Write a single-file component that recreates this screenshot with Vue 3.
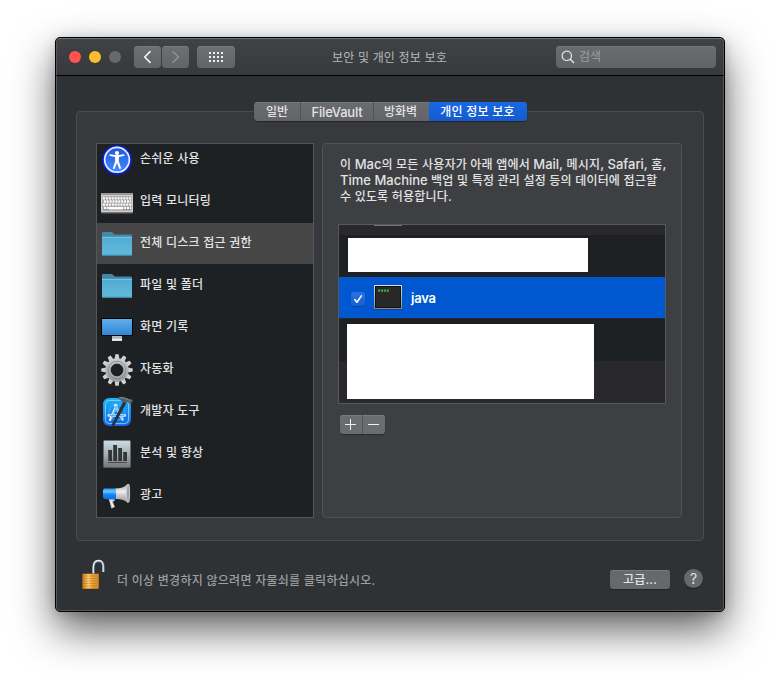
<script setup>
const categories = [
  { id: 'access', label: '손쉬운 사용' },
  { id: 'keyboard', label: '입력 모니터링' },
  { id: 'folder', label: '전체 디스크 접근 권한', selected: true },
  { id: 'folder', label: '파일 및 폴더' },
  { id: 'screen', label: '화면 기록' },
  { id: 'gear', label: '자동화' },
  { id: 'dev', label: '개발자 도구' },
  { id: 'stats', label: '분석 및 향상' },
  { id: 'ads', label: '광고' },
]
const tabs = [
  { label: '일반', cls: 't1' },
  { label: 'FileVault', cls: 't2' },
  { label: '방화벽', cls: 't3' },
  { label: '개인 정보 보호', cls: 't4' },
]
const teeth = Array.from({ length: 12 }, (_, i) => i * 30)
const keyRows = [11, 14.2, 17.4, 20.6]
</script>

<template>
  <div class="stage">
    <div class="window">
      <header class="toolbar">
        <div class="lights"><i class="red"></i><i class="yellow"></i><i class="off"></i></div>
        <div class="nav">
          <button class="tb">
            <svg width="27" height="22" viewBox="0 0 27 22"><path d="M16 5.7 10.7 11l5.3 5.3" fill="none" stroke="#f2f2f2" stroke-width="1.7" stroke-linecap="round" stroke-linejoin="round" /></svg>
          </button>
          <button class="tb">
            <svg width="27" height="22" viewBox="0 0 27 22"><path d="M11 5.7 16.3 11 11 16.3" fill="none" stroke="#909193" stroke-width="1.5" stroke-linecap="round" stroke-linejoin="round" /></svg>
          </button>
        </div>
        <button class="tb all">
          <svg width="38" height="22" viewBox="0 0 38 22" fill="#f1f1f1" shape-rendering="crispEdges">
            <template v-for="y in 3" :key="y">
              <rect v-for="x in 4" :key="x" :x="8 + x * 4" :y="2 + y * 4" width="2" height="2" />
            </template>
          </svg>
        </button>
        <h1>보안 및 개인 정보 보호</h1>
        <div class="search">
          <svg width="14" height="14" viewBox="0 0 14 14" fill="none" stroke="#e4e4e5" stroke-width="1.2"><circle cx="5.8" cy="5.8" r="4.7" /><path d="m9.3 9.3 3.7 3.7" stroke-width="1.5" /></svg>
          <span>검색</span>
        </div>
      </header>

      <main class="body">
        <section class="group">
          <nav class="tabs">
            <button v-for="t in tabs" :key="t.cls" :class="['tab', t.cls]">{{ t.label }}</button>
          </nav>
          <div class="columns">
            <ul class="list">
              <li v-for="(c, i) in categories" :key="i" :class="{ selected: c.selected }">
                <svg class="icon" width="32" height="32" viewBox="0 0 32 32">
                  <g v-if="c.id === 'access'">
                    <circle cx="16" cy="16" r="15" fill="#0a1ddb" />
                    <circle cx="16" cy="15.8" r="13.2" fill="#e9f1ff" />
                    <circle cx="16" cy="15.8" r="11.5" fill="url(#blueball)" />
                    <circle cx="16" cy="9" r="2.1" fill="#fff" />
                    <path d="M8.3 11.7 14 13l.2 4.2-2.4 7.2 1.8.7L16 19l2.4 6.1 1.8-.7-2.4-7.2.2-4.2 5.7-1.3-.4-1.5-5.8.9h-3l-5.8-.9z" fill="#fff" />
                  </g>
                  <g v-else-if="c.id === 'keyboard'">
                    <rect x="0" y="7" width="32" height="20.5" rx="1" fill="#77716f" />
                    <rect x="0" y="7" width="32" height="19" rx="1" fill="#d2cecd" />
                    <rect x="0" y="7" width="32" height="2" rx="1" fill="#9e9594" />
                    <rect x="1.5" y="10.5" width="29" height="14" fill="#969696" />
                    <path v-for="(y, k) in keyRows" :key="y" :d="`M${k % 2 ? 2.8 : 2} ${y + 1.3}H30`" stroke="#fff" stroke-width="2.3" stroke-dasharray="2.1 .8" />
                    <rect x="8" y="21" width="14" height="2.4" fill="#fff" />
                  </g>
                  <g v-else-if="c.id === 'folder'">
                    <path d="M1 5.2Q1 4 2.2 4h8.3q.8 0 1.5.8l1.6 1.700h16q1.400 0 1.400 1.400V12H1z" fill="#4488a9" />
                    <path d="M1 9h30v18q0 1-1 1H2q-1 0-1-1z" fill="url(#folder)" />
                    <path d="M1 9.3h30" stroke="#8ed0e8" stroke-width=".8" />
                    <path d="M1 27.6h30" stroke="#377f9d" stroke-width=".8" />
                  </g>
                  <g v-else-if="c.id === 'screen'">
                    <path d="M11 23h10v5.8H11z" fill="#b7b7b7" />
                    <path d="M11 26.8h10v2H11z" fill="#f1f1f1" />
                    <rect x="0" y="6" width="32" height="18" rx="1" fill="#030405" />
                    <rect x="1" y="7" width="30" height="16" fill="url(#screen)" />
                  </g>
                  <g v-else-if="c.id === 'gear'">
                    <path v-for="a in teeth" :key="a" d="M13.500 5.500 14.400.3h3.200l.9 5.200z" fill="url(#metal)" :transform="`rotate(${a} 16 16)`" />
                    <circle cx="16" cy="16" r="9.1" fill="none" stroke="url(#metal)" stroke-width="5.2" />
                    <circle cx="16" cy="16" r="8.800" fill="none" stroke="#7d8184" stroke-width=".8" />
                    <circle cx="16" cy="16" r="6.800" fill="none" stroke="#a9acae" stroke-width=".6" />
                  </g>
                  <g v-else-if="c.id === 'dev'">
                    <rect x="2" y="2" width="28" height="28" rx="6" fill="url(#dev)" />
                    <rect x="4.4" y="4.4" width="23.2" height="23.2" rx="4" fill="none" stroke="#8bd3fb" stroke-width=".9" />
                    <circle cx="16" cy="16" r="8" fill="none" stroke="#52b2f2" stroke-width=".7" />
                    <path d="m9 24 6.500-14.500M14 9l7.500 14.500M7.500 19.500h16.500" fill="none" stroke="#d5efff" stroke-width="2.300" stroke-linecap="round" />
                    <path d="m10.500 21.500 5-11M14.500 10l6.500 12.500M8.500 19.500h15" fill="none" stroke="#3f9eec" stroke-width=".8" />
                    <path d="M22.300 5.500 10.500 29l2.500 1.300L25.300 7z" fill="#2d3135" />
                    <path d="M17 1.700q5-2 9 .8l3.800 1.100 1.200-.5 1 1.700-2 3-2-.4-.8-1.600-2.600 1.300-4-1.900q-1.300-2.400-3.600-2.500z" fill="#565c61" />
                    <path d="M18 1.800q4-1 7 1l4.500 1.800" stroke="#99a1a6" fill="none" stroke-width=".7" />
                  </g>
                  <g v-else-if="c.id === 'stats'">
                    <rect x="2" y="2" width="28" height="28" rx="1.500" fill="#4b5862" />
                    <rect x="2.800" y="2.800" width="26.400" height="26.400" rx=".8" fill="url(#stats)" />
                    <path d="M7 12h4v11H7zM12 7h4v16h-4zM17 10h4v13h-4zM22 14h4v9h-4zM7 24.200h19v.9H7z" fill="#333638" />
                    <path d="M7.500 13v10M12.500 8v15M17.500 11v12M22.500 15v8" stroke="#55595b" stroke-width=".8" />
                  </g>
                  <g v-else>
                    <path d="m7.500 18 6.500 1.500-.6 1.500-1.600.7 2.200 5.300-3.600 1.600z" fill="#c9cbcd" />
                    <path d="m9.500 20 2.600 7" stroke="#fff" stroke-width="1" />
                    <path d="M14 8.500q8.500 0 12.500-4.500l2 .3v17.500l-2 .9q-4.500-4.200-12.500-3.700z" fill="url(#horn)" />
                    <ellipse cx="27" cy="13.300" rx="1.700" ry="9.200" fill="#a0a2a4" stroke="#dcddde" stroke-width=".7" />
                    <path d="M3.300 8.500H15v10.800H4.500Q2 19 2 16.800v-6.300q0-1.500 1.300-2z" fill="url(#ad)" />
                  </g>
                </svg>
                <span>{{ c.label }}</span>
              </li>
            </ul>

            <section class="detail">
              <p>
                <span class="l1">이 <b>Mac</b>의 모든 사용자가 아래 앱에서 <b>Mail,</b> 메시지<b>,</b> <b>Safari,</b> 홈<b>,</b></span>
                <span class="l2"><b>Time Machine</b> 백업 및 특정 관리 설정 등의 데이터에 접근할</span>
                <span class="l3">수 있도록 허용합니다.</span>
              </p>
              <div class="table">
                <div class="row first"><i class="peek"></i></div>
                <div class="row dark"><i class="cover one"></i></div>
                <div class="row active">
                  <span class="check">
                    <svg width="14" height="14" viewBox="0 0 14 14"><path d="m3.700 7.500 2.200 2.700 4.500-6.300" fill="none" stroke="#fff" stroke-width="1.600" stroke-linecap="round" stroke-linejoin="round" /></svg>
                  </span>
                  <svg class="term" width="28" height="25" viewBox="0 0 28 25">
                    <rect y="1" width="28" height="24" rx=".5" fill="#0b3c91" />
                    <rect width="28" height="24" rx=".5" fill="url(#frame)" />
                    <rect x="1" y="1" width="26" height="22" fill="#111" />
                    <rect x="2" y="2" width="24" height="20" fill="#282828" />
                    <path d="M4 5.600h11" stroke="#38a547" stroke-width="2.200" stroke-dasharray="2.300 .7" />
                  </svg>
                  <b>java</b>
                </div>
                <div class="row next"><i class="cover two"></i></div>
                <div class="row last"></div>
              </div>
              <div class="pm">
                <svg width="45" height="19" viewBox="0 0 45 19" shape-rendering="crispEdges"><path d="M5 9.500h11M10.500 4v11M28 9.500h11" stroke="#efefef" stroke-width="1" /><path d="M22.500 0v19" stroke="#535457" /></svg>
              </div>
            </section>
          </div>
        </section>

        <footer>
          <svg class="lock" width="26" height="32" viewBox="0 0 26 32">
            <path d="M12.500 16V8.500Q12.500 2 17.500 2t5 6.500V13" fill="none" stroke="#6e8794" stroke-width="2.400" />
            <path d="M12.300 16V8.500Q12.300 1.500 17.500 1.500t4.700 7V13" fill="none" stroke="#e2eef5" stroke-width="1.300" />
            <path d="M1 15.300 2.500 14.500H18V29L16 30H1z" fill="#a65910" />
            <rect x="2" y="15" width="15.500" height="14.500" fill="url(#brass)" />
            <path d="M2 17h15M2 19.500h15M2 22h15M2 24.500h15M2 27h15" stroke="#b66f18" stroke-width=".7" opacity=".6" />
          </svg>
          <span class="hint">더 이상 변경하지 않으려면 자물쇠를 클릭하십시오.</span>
          <button class="adv">고급...</button>
          <button class="help">?</button>
        </footer>
      </main>
    </div>
    <svg class="defs" width="0" height="0">
      <defs>
        <linearGradient id="blueball" x2="0" y2="1"><stop stop-color="#2257d8" /><stop offset="1" stop-color="#3f8cff" /></linearGradient>
        <linearGradient id="folder" x2="0" y2="1"><stop stop-color="#50abd3" /><stop offset=".85" stop-color="#62b8d9" /><stop offset="1" stop-color="#4c9fc0" /></linearGradient>
        <linearGradient id="screen" x2="0" y2="1"><stop stop-color="#61aeec" /><stop offset="1" stop-color="#2f87d3" /></linearGradient>
        <linearGradient id="metal" gradientUnits="userSpaceOnUse" x1="0" y1="0" x2="0" y2="32"><stop stop-color="#d4d8da" /><stop offset="1" stop-color="#8c8f91" /></linearGradient>
        <linearGradient id="dev" x2="0" y2="1"><stop stop-color="#19b5f4" /><stop offset="1" stop-color="#1463e6" /></linearGradient>
        <linearGradient id="stats" x2="0" y2="1"><stop stop-color="#cadbe3" /><stop offset=".55" stop-color="#a2aaae" /><stop offset="1" stop-color="#777675" /></linearGradient>
        <linearGradient id="horn" x2="0" y2="1"><stop stop-color="#a1a4a7" /><stop offset=".4" stop-color="#eeeeef" /><stop offset="1" stop-color="#8b8d90" /></linearGradient>
        <linearGradient id="ad" x2="0" y2="1"><stop stop-color="#2f9df5" /><stop offset=".3" stop-color="#66c4ff" /><stop offset=".55" stop-color="#148af6" /><stop offset="1" stop-color="#086bd8" /></linearGradient>
        <linearGradient id="frame" x2="0" y2="1"><stop stop-color="#e1e4e5" /><stop offset="1" stop-color="#858785" /></linearGradient>
        <linearGradient id="brass"><stop stop-color="#cb8024" /><stop offset=".35" stop-color="#ffd073" /><stop offset=".6" stop-color="#e5a13b" /><stop offset="1" stop-color="#d58c2a" /></linearGradient>
      </defs>
    </svg>
  </div>
</template>

<style>
html, body { background: #fff; margin: 0; overflow: hidden; }
</style>

<style scoped>
* { box-sizing: border-box; }
.stage { width: 780px; height: 685px; padding: 37px 55px; background: #fff; overflow: hidden; font-family: Inter, "Noto Sans CJK KR", sans-serif; font-size: 12px; color: #e3e3e4; white-space: nowrap; }
button { border: 0; padding: 0; margin: 0; font: inherit; color: inherit; display: block; }
svg { display: block; flex: none; }
.window { width: 670px; height: 575px; border: 1px solid #000; border-radius: 5px; background: #2e3235; overflow: hidden; box-shadow: 0 18px 42px rgba(0,0,0,.62), 0 2px 12px rgba(0,0,0,.16); }
.toolbar { height: 38px; border: 1px solid #55585b; border-top-color: #707375; border-bottom: 1px solid #000; border-radius: 4px 4px 0 0; background: linear-gradient(#404346, #37393c); display: flex; align-items: center; padding: 0 7px 0 12px; }
.lights { display: flex; gap: 8px; }
.lights i { width: 12px; height: 12px; border-radius: 50%; }
.red { background: #ff534d; }
.yellow { background: #fdbc2d; }
.off { background: #68696b; }
.nav { display: flex; gap: 1px; margin-left: 13px; }
.tb { height: 22px; border-radius: 4px; background: linear-gradient(#6d7072, #626467); box-shadow: inset 0 1px #787a7c; }
.all { margin-left: 8px; }
h1 { flex: 1; margin: 0; padding: 2px 0 0 97px; font-size: 12px; line-height: 18px; font-weight: 400; color: #b5b7b9; letter-spacing: .16px; }
.search { width: 160px; height: 22px; border-radius: 4px; background: linear-gradient(#6a6d6f, #616366); display: flex; align-items: center; padding-left: 5px; gap: 4px; color: #9b9da0; box-shadow: inset 0 1px #75777a; line-height: 18px; }
.search span { margin-top: -1px; }
.body { height: 535px; border: 1px solid #55585a; border-top: 0; border-radius: 0 0 4px 4px; padding: 35px 19px 0; }
.group { height: 430px; border: 1px solid #4a4c4f; border-radius: 4px; background: #38393c; }
.tabs { display: flex; width: 273px; height: 19px; margin: -10px auto 0 177px; border-radius: 4px; overflow: hidden; font-weight: 500; background: #67686b; box-shadow: 0 1px 1px #232528; }
.tab { height: 19px; line-height: 18px; text-align: center; background: linear-gradient(#6b6c6f, #636467); box-shadow: inset 0 1px #78797b; border-right: 1px solid #525356; }
.t1 { width: 47px; }
.t2 { width: 73px; font-size: 13px; letter-spacing: -.2px; }
.t3 { width: 55px; border-right: 0; padding-right: 2px; }
.t4 { width: 98px; border: 0; background: linear-gradient(#1768e5, #145bcc); box-shadow: none; color: #fff; letter-spacing: .25px; padding-right: 1px; }
.columns { display: flex; gap: 8px; padding: 22px 0 0 19px; }
.list { list-style: none; margin: 0; width: 218px; height: 375px; border: 1px solid #555659; background: #1d2123; padding: 0; overflow: hidden; font-weight: 500; }
.list li { display: flex; height: 41px; margin-bottom: 1px; padding: 5px 0 0 4px; gap: 7px; }
.list li:first-child { margin-top: -5px; }
.list li.selected { background: #464646; }
.list span { line-height: 18px; margin-top: 6px; letter-spacing: .23px; }
.detail { width: 360px; height: 375px; border: 1px solid #515255; border-radius: 4px; background: #3e3f42; padding: 12px 15px 0; }
p { margin: 1px 0 19px 2px; font-weight: 500; height: 48px; }
p span { display: block; line-height: 16px; height: 16px; letter-spacing: .2px; }
p b { font-size: 13px; font-weight: 500; line-height: 10px; letter-spacing: 0; }
.table { width: 328px; height: 180px; border: 1px solid #57585b; background: #1d2123; overflow: hidden; }
.row { position: relative; }
.first { height: 10px; background: #29292d; padding-left: 35px; }
.peek { display: block; width: 28px; height: 1px; background: #767873; }
.dark { height: 42px; }
.active { height: 41px; background: #0058d0; display: flex; align-items: center; padding-left: 12px; color: #fff; }
.active b { font-size: 13px; font-weight: 600; margin-left: 9px; letter-spacing: -.2px; }
.check { width: 14px; height: 14px; border-radius: 3px; background: linear-gradient(#2572e8, #175dce); box-shadow: 0 1px 1px #0049ae; margin-top: 2px; }
.term { margin-left: 9px; }
.next { height: 43px; border-top: 1px solid #29292d; }
.last { height: 42px; background: #29292d; }
.cover { position: absolute; background: #fff; z-index: 2; }
.one { left: 9px; top: 3px; width: 240px; height: 34px; }
.two { left: 8px; top: 5px; width: 247px; height: 75px; }
.pm { width: 45px; height: 19px; margin: 11px 0 0 1px; border-radius: 3px; background: #6b6c6f; box-shadow: 0 1px 1px #2a2b2d, inset 0 1px #7a7b7d; }
.table + .pm { margin-left: 2px; }
footer { display: flex; padding: 17px 0 0 5px; }
.lock { margin-top: 1px; }
.hint { margin: 14px 0 0 10px; line-height: 18px; color: #9c9ea0; letter-spacing: .26px; width: 493px; font-weight: 500; }
.adv { width: 60px; height: 19px; flex: none; margin-top: 12px; line-height: 18px; border-radius: 3px; background: #67686b; box-shadow: inset 0 1px #77787a, 0 1px 1px #202326; font-weight: 500; letter-spacing: .2px; }
.help { width: 19px; height: 19px; flex: none; margin: 11px 0 0 14px; border-radius: 50%; background: #67686b; box-shadow: 0 1px 1px #202326; font-size: 14px; line-height: 19px; text-align: center; }
</style>
